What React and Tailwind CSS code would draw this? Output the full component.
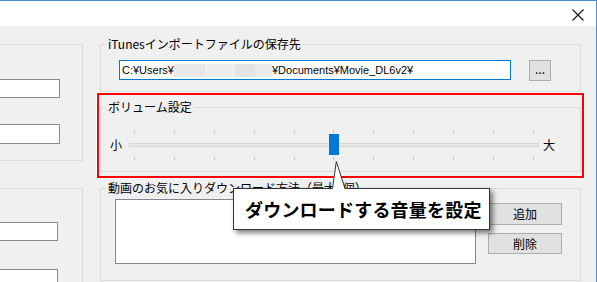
import React from 'react';

const ticks = Array.from({ length: 11 });

const GroupBox = ({ label, className = '', children }) => (
  <div className={`relative border border-[#dcdcdc] ${className}`}>
    {label && (
      <span className="absolute -top-[9px] left-[5px] px-[2px] bg-[#f0f0f0] leading-[16px] whitespace-nowrap">
        {label}
      </span>
    )}
    {children}
  </div>
);

const WinButton = ({ children, className = '' }) => (
  <button className={`flex items-center justify-center bg-[#e1e1e1] border border-[#adadad] text-[12px] leading-none ${className}`}>
    {children}
  </button>
);

const TickRow = () => (
  <div className="flex justify-between px-[5px] h-[3px]">
    {ticks.map((_, i) => (
      <div key={i} className="w-px h-[3px] bg-[#c4c4c4]"></div>
    ))}
  </div>
);

const App = () => {
  return (
    <div className="relative w-[597px] h-[282px] overflow-hidden bg-[#f0f0f0] border-t border-r border-[#4a8fd4] text-[12px] text-black font-['Noto_Sans_CJK_JP',sans-serif]">
      {/* Title bar */}
      <div className="h-[25px] bg-white flex items-center justify-end pr-[12px]">
        <svg width="12" height="12" viewBox="0 0 12 12" className="mt-[2px]">
          <path d="M0.5 0.5 L11.5 11.5 M11.5 0.5 L0.5 11.5" stroke="#111" strokeWidth="1.1" fill="none" />
        </svg>
      </div>

      <div className="flex gap-[17px] mt-[18px] -ml-[30px]">
        {/* Left column (cut off) */}
        <div className="w-[113px] flex flex-col">
          <GroupBox className="h-[117px] pt-[34px] pl-[9px]">
            <div className="w-[80px] h-[19px] bg-white border border-[#8a8a8a]"></div>
            <div className="w-[80px] h-[20px] mt-[26px] bg-white border border-[#8a8a8a]"></div>
          </GroupBox>
          <GroupBox className="h-[120px] mt-[27px] pt-[33px] pl-[9px]">
            <div className="w-[78px] h-[19px] bg-white border border-[#8a8a8a]"></div>
            <div className="w-[78px] h-[20px] mt-[28px] bg-white border border-[#8a8a8a]"></div>
          </GroupBox>
        </div>

        {/* Right column */}
        <div className="w-[481px] flex flex-col">
          <GroupBox label="iTunesインポートファイルの保存先" className="h-[48px] pt-[15px] pl-[18px]">
            <div className="flex items-start">
              <div className="w-[392px] h-[20px] bg-white border border-[#0078d7] flex items-center pl-[2px] leading-none whitespace-nowrap text-[11px] font-['Liberation_Sans',sans-serif]">
                <span>C:¥Users¥</span>
                <span className="flex h-[13px]">
                  <span className="w-[31px] bg-[#e8e8e8]"></span>
                  <span className="w-[30px] bg-[#eeeeee]"></span>
                  <span className="w-[20px] bg-[#e4e4e4]"></span>
                  <span className="w-[17px] bg-[#ebebeb]"></span>
                </span>
                <span>¥Documents¥Movie_DL6v2¥</span>
              </div>
              <WinButton className="ml-[18px] w-[22px] h-[21px] pb-[4px]">...</WinButton>
            </div>
          </GroupBox>

          <GroupBox label="ボリューム設定" className="h-[65px] mt-[15px] pt-[22px] pl-[9px]">
            <div className="flex">
              <span className="w-[19px] leading-[16px] mt-[7px]">小</span>
              <div className="relative w-[410px] flex flex-col">
                <TickRow />
                <div className="mt-[10px] h-[4px] bg-[#e7e7e7] border border-[#d6d6d6]"></div>
                <div className="mt-[10px]">
                  <TickRow />
                </div>
                <div className="absolute left-[200px] top-[4px] w-[10px] h-[21px] bg-[#0078d7]"></div>
              </div>
              <span className="ml-[4px] leading-[16px] mt-[7px]">大</span>
            </div>
          </GroupBox>

          <GroupBox label="動画のお気に入りダウンロード方法（最大5個）" className="h-[93px] mt-[16px] pt-[10px] pl-[14px]">
            <div className="flex items-start">
              <div className="w-[361px] h-[65px] bg-white border border-[#828790]"></div>
              <div className="ml-[12px] pt-[4px] flex flex-col gap-[8px]">
                <WinButton className="w-[74px] h-[22px]">追加</WinButton>
                <WinButton className="w-[74px] h-[21px]">削除</WinButton>
              </div>
            </div>
          </GroupBox>
        </div>
      </div>

      {/* Red highlight */}
      <div className="absolute left-[97px] top-[92px] w-[487px] h-[85px] border-2 border-[#ff0000] shadow-[0_0_0_1px_#ffffff]"></div>

      {/* Callout */}
      <div className="absolute left-[233px] top-[187px] w-[257px] h-[42px] bg-white border border-[#333333] shadow-[3px_3px_5px_rgba(0,0,0,0.5)] flex items-center pl-[11px] text-[18px] font-bold leading-none tracking-[0.2px] whitespace-nowrap">
        ダウンロードする音量を設定
      </div>
      <svg className="absolute left-[328px] top-[157px]" width="22" height="32" viewBox="0 0 22 32">
        <polygon points="4,31.5 8,3 17,31.5" fill="#ffffff" />
        <polyline points="4.5,30.5 8.3,3.5 17,30.5" fill="none" stroke="#333333" strokeWidth="1" />
      </svg>
    </div>
  );
};

export default App;
